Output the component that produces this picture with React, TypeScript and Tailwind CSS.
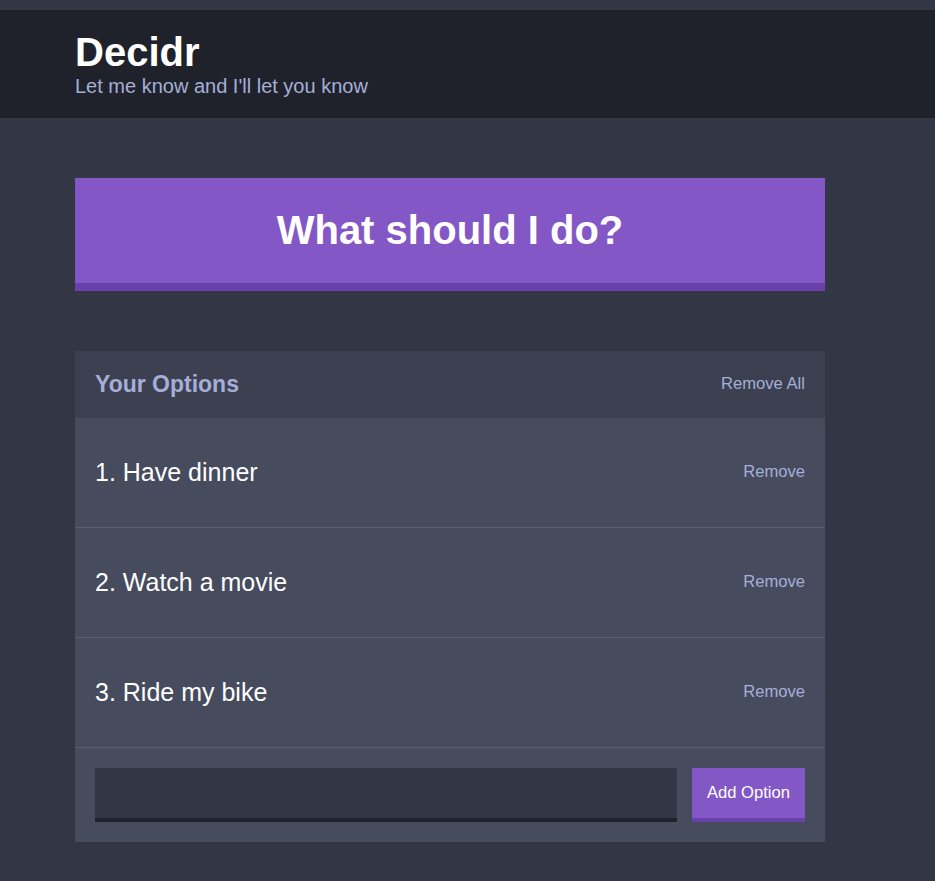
const options = ["Have dinner", "Watch a movie", "Ride my bike"];

function Header() {
  return (
    <div className="bg-[#20222b] pt-[19px] pb-[20px]">
      <div className="pl-[75px]">
        <h1 className="text-[40px] font-bold leading-[46px] text-white">Decidr</h1>
        <h2 className="text-[20px] leading-[23px] text-[#a5afd7]">Let me know and I'll let you know</h2>
      </div>
    </div>
  );
}

function Option({ index, text }: { index: number; text: string }) {
  return (
    <div className="flex h-[110px] items-center justify-between border-b border-[#596075] px-5">
      <p className="text-[25px] text-white">
        {index}. {text}
      </p>
      <button type="button" className="text-[16.6px] text-[#a5afd7]">
        Remove
      </button>
    </div>
  );
}

export default function App() {
  return (
    <div className="min-h-[881px] bg-[#333745] pt-[10px] font-['Liberation_Sans',Arial,sans-serif]">
      <Header />
      <div className="w-[750px] ml-[75px] pt-[60px]">
        <button
          type="button"
          className="flex h-[113px] w-full items-center justify-center border-b-8 border-[#6a40ad] bg-[#8357c5] pb-[2px] text-[40px] font-bold text-white"
        >
          What should I do?
        </button>

        <div className="mt-[60px] bg-[#464b5e]">
          <div className="flex h-[67px] items-center justify-between bg-[#3c4051] px-5">
            <h3 className="text-[23px] font-bold text-[#a5afd7]">Your Options</h3>
            <button type="button" className="text-[16.6px] text-[#a5afd7]">
              Remove All
            </button>
          </div>
          {options.map((o, i) => (
            <Option key={o} index={i + 1} text={o} />
          ))}
          <form className="flex gap-[15px] p-5">
            <input
              type="text"
              className="h-[54px] flex-1 border-b-4 border-[#20222b] bg-[#333745] px-3 text-white outline-none"
            />
            <button
              type="button"
              className="h-[54px] w-[113px] border-b-4 border-[#6a40ad] bg-[#8357c5] text-[16.6px] text-white"
            >
              Add Option
            </button>
          </form>
        </div>
      </div>
    </div>
  );
}
